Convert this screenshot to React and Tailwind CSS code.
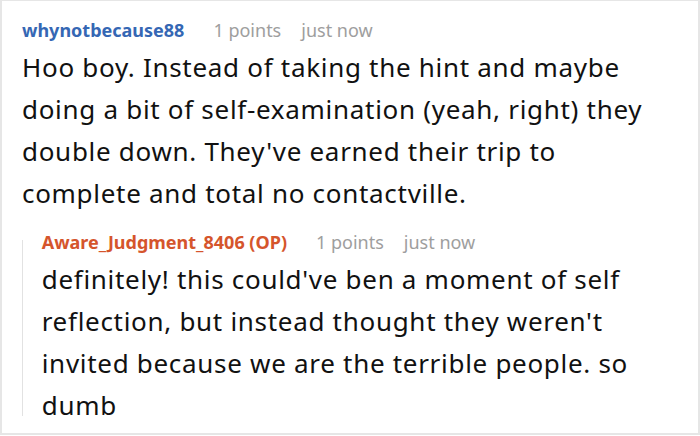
function Meta({ name, color }) {
  return (
    <div className="flex items-baseline text-[18px] leading-[26px]">
      <span className={`font-bold ${color}`}>{name}</span>
      <span className="ml-[29px] text-[#9e9e9e]">1 points</span>
      <span className="ml-[20px] text-[#9e9e9e]">just now</span>
    </div>
  );
}

export default function App() {
  return (
    <div className="h-[436px] w-[700px] bg-white font-['Noto_Sans',sans-serif]">
      <div className="h-[435px] border-x-2 border-b-2 border-t border-[#e6e6e6] px-[20px] pt-[16px]">
        <Meta name="whynotbecause88" color="text-[#3567b4]" />
        <p className="mt-[3px] text-[26px] leading-[42px] tracking-[0.7px] text-[#111]">
          Hoo boy. Instead of taking the hint and maybe doing a bit of self-examination (yeah, right) they double down. They've earned their trip to complete and total no contactville.
        </p>
        <div className="mt-[15px] flex">
          <div className="mt-[11px] mb-[10px] w-[2px] bg-[#e2e2e2]"></div>
          <div className="pl-[19px]">
            <Meta name="Aware_Judgment_8406 (OP)" color="text-[#d5552c]" />
            <p className="mt-[3px] text-[26px] leading-[42px] tracking-[0.7px] text-[#111]">
              definitely! this could've ben a moment of self reflection, but instead thought they weren't invited because we are the terrible people. so dumb
            </p>
          </div>
        </div>
      </div>
    </div>
  );
}
